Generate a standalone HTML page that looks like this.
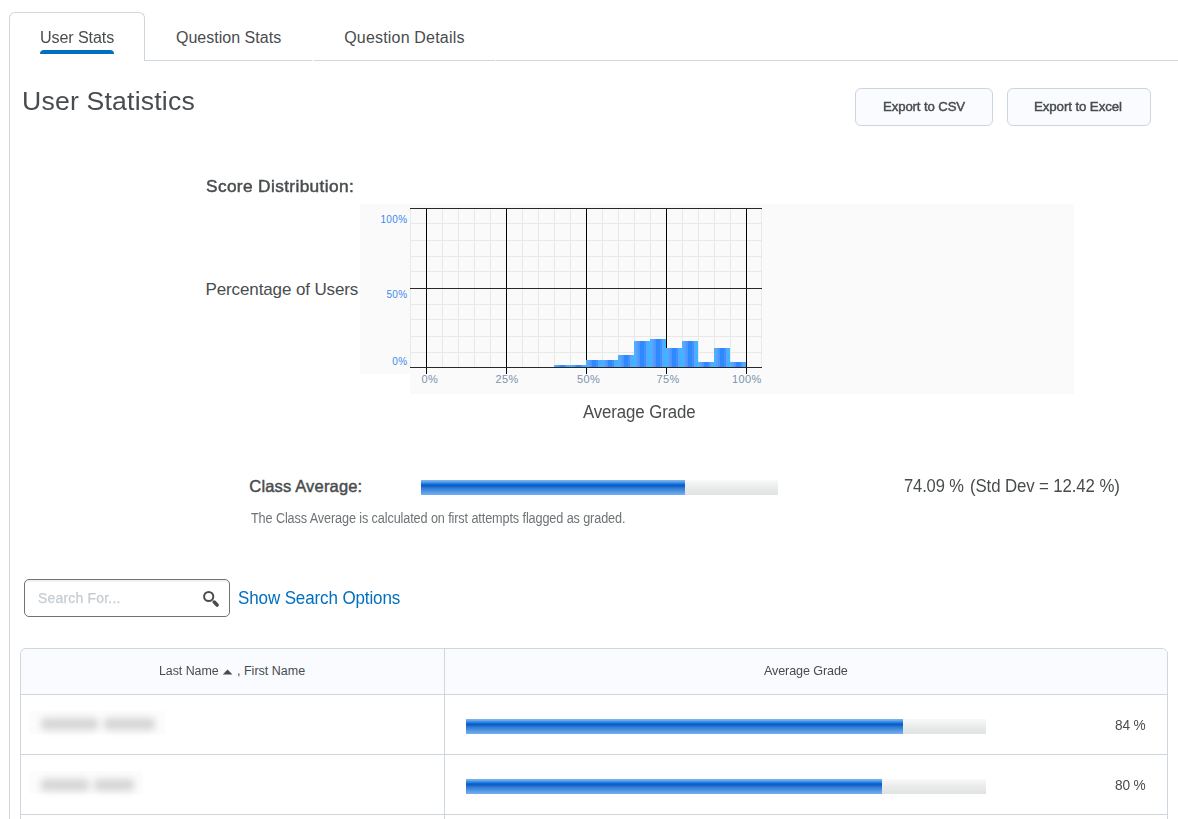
<!DOCTYPE html>
<html><head><meta charset="utf-8">
<style>
html,body{margin:0;padding:0;background:#fff;}
body{width:1178px;height:819px;overflow:hidden;position:relative;font-family:"Liberation Sans",sans-serif;color:#494c4e;}
.a{position:absolute;white-space:nowrap;}
.tx{position:absolute;white-space:nowrap;line-height:40px;transform-origin:0 0;color:#494c4e;}
/* tabs */
#vline{left:9px;top:60px;width:1px;height:759px;background:#cfd6de;}
#hline{left:144px;top:60px;width:1034px;height:1px;background:#cfd6de;}
#tab{left:9px;top:12px;width:134px;height:48px;border:1px solid #cfd6de;border-bottom:none;border-radius:6px 6px 0 0;background:#fff;}
#uline{left:40px;top:50px;width:74px;height:4px;background:#006fbf;border-radius:4px 4px 0 0;}
.btn{height:36px;border:1px solid #cdd5dd;border-radius:6px;background:#f9fbff;}
/* chart */
.bg{background:#fafafa;}
.yl{font-size:10px;color:#3f88ec;text-align:right;line-height:10px;letter-spacing:0.4px;}
.xl{font-size:11px;color:#7a93aa;line-height:11px;letter-spacing:0.4px;}
.pbar{height:15px;background:linear-gradient(#f8f8f8 0px,#f8f8f8 1px,#f6f6f6 1px,#f6f6f6 2px,#f4f4f4 2px,#f4f4f4 3px,#f2f3f3 3px,#f2f3f3 4px,#f0f1f1 4px,#f0f1f1 5px,#eeefef 5px,#eeefef 6px,#ececec 6px,#ececec 7px,#eaebeb 7px,#eaebeb 8px,#e9eaea 8px,#e9eaea 9px,#e7e8e8 9px,#e7e8e8 10px,#e6e7e7 10px,#e6e7e7 11px,#e5e6e6 11px,#e5e6e6 12px,#e4e5e5 12px,#e4e5e5 13px,#e3e4e4 13px,#e3e4e4 14px,#e2e3e3 14px,#e2e3e3 15px);}
.pfill{position:absolute;left:0;top:0;height:15px;background:linear-gradient(#7ab0e8 0px,#7ab0e8 1px,#68a6ea 1px,#68a6ea 2px,#4290e8 2px,#4290e8 3px,#2a80e2 3px,#2a80e2 4px,#0a68d8 4px,#0a68d8 5px,#0560d0 5px,#0560d0 6px,#2262b8 6px,#2262b8 7px,#2a72d0 7px,#2a72d0 8px,#2e80e0 8px,#2e80e0 9px,#3a86d8 9px,#3a86d8 10px,#4a8ed8 10px,#4a8ed8 11px,#5595e0 11px,#5595e0 12px,#5e9ee8 12px,#5e9ee8 13px,#68a6ec 13px,#68a6ec 14px,#70aaf0 14px,#70aaf0 15px);}
#table{left:20px;top:648px;width:1146px;height:200px;border:1px solid #cfd6de;border-radius:6px 6px 0 0;}
.blur{background:#d6d6d6;filter:blur(3.5px);height:12px;border-radius:4px;}
#note{color:#6e7376;}
#show{color:#006fbf;}
#search{color:#c5ccd3;-webkit-text-stroke:0.25px #c5ccd3;}
#tab1{left:39.59px;top:18px;font-size:16.0px;font-weight:normal;letter-spacing:-0.120px;transform:scaleX(1.0083);}
#tab2{left:176.00px;top:18px;font-size:16.0px;font-weight:normal;letter-spacing:0.015px;}
#tab3{left:344.20px;top:18px;font-size:16.0px;font-weight:normal;letter-spacing:0.187px;}
#title{left:22.29px;top:81px;font-size:26.5px;font-weight:normal;letter-spacing:0.193px;transform:scaleX(1.0041);}
#csv{left:882.52px;top:87px;font-size:13.5px;font-weight:normal;-webkit-text-stroke:0.45px currentColor;letter-spacing:-0.120px;transform:scaleX(0.9771);}
#excel{left:1033.91px;top:87px;font-size:13.5px;font-weight:normal;-webkit-text-stroke:0.45px currentColor;letter-spacing:-0.120px;transform:scaleX(0.9875);}
#score{left:206.20px;top:167px;font-size:16.0px;font-weight:normal;-webkit-text-stroke:0.45px currentColor;letter-spacing:0.350px;transform:scaleX(1.0779);}
#pct{left:205.50px;top:270px;font-size:17.0px;font-weight:normal;letter-spacing:-0.117px;}
#avg{left:583.30px;top:392px;font-size:17.5px;font-weight:normal;letter-spacing:-0.120px;transform:scaleX(0.9624);}
#classavg{left:249.30px;top:466px;font-size:16.5px;font-weight:normal;-webkit-text-stroke:0.45px currentColor;letter-spacing:0.169px;}
#note{left:250.50px;top:498px;font-size:14.0px;font-weight:normal;letter-spacing:-0.120px;transform:scaleX(0.9039);}
#std1{left:904.26px;top:466px;font-size:17.5px;font-weight:normal;letter-spacing:-0.120px;transform:scaleX(0.9435);}
#std2{left:970.04px;top:466px;font-size:17.5px;font-weight:normal;letter-spacing:-0.120px;transform:scaleX(0.9610);}
#show{left:238.36px;top:578px;font-size:18.0px;font-weight:normal;letter-spacing:-0.120px;transform:scaleX(0.9439);}
#search{left:37.50px;top:578px;font-size:14.0px;font-weight:normal;letter-spacing:0.217px;transform:scaleX(0.9951);}
#hn1{left:159.41px;top:651px;font-size:12.5px;font-weight:normal;letter-spacing:-0.050px;transform:scaleX(0.9932);}
#hn2{left:237.00px;top:651px;font-size:12.5px;font-weight:normal;letter-spacing:0.009px;}
#havg{left:764.00px;top:651px;font-size:13.5px;font-weight:normal;letter-spacing:-0.120px;transform:scaleX(0.9322);}
#p84{left:1114.80px;top:705px;font-size:14.0px;font-weight:normal;letter-spacing:-0.120px;transform:scaleX(0.9742);}
#p80{left:1114.80px;top:765px;font-size:14.0px;font-weight:normal;letter-spacing:-0.120px;transform:scaleX(0.9742);}
</style></head>
<body>
<div class="a" id="vline"></div>
<div class="a" id="hline"></div>
<div class="a" id="tab"></div>
<div class="a" id="uline"></div>
<div class="a" style="left:312px;top:60px;width:2px;height:1px;background:#f2f4f6;"></div>
<div class="a" style="left:495px;top:60px;width:1px;height:1px;background:#f2f4f6;"></div>
<div class="tx" id="tab1">User Stats</div>
<div class="tx" id="tab2">Question Stats</div>
<div class="tx" id="tab3">Question Details</div>

<div class="tx" id="title">User Statistics</div>
<div class="a btn" style="left:855px;top:88px;width:136px;"></div>
<div class="a btn" style="left:1007px;top:88px;width:142px;"></div>
<div class="tx" id="csv">Export to CSV</div>
<div class="tx" id="excel">Export to Excel</div>

<div class="tx" id="score">Score Distribution:</div>
<div class="tx" id="pct">Percentage of Users</div>

<div class="a bg" style="left:360px;top:204px;width:50px;height:170px;"></div>
<div class="a bg" style="left:410px;top:204px;width:664px;height:190px;"></div>
<svg class="a" style="left:0;top:0;" width="1178" height="819" viewBox="0 0 1178 819" shape-rendering="crispEdges">
<rect x="410" y="208" width="1" height="160" fill="#e8e8e8"/>
<rect x="426" y="208" width="1" height="160" fill="#e8e8e8"/>
<rect x="442" y="208" width="1" height="160" fill="#e8e8e8"/>
<rect x="458" y="208" width="1" height="160" fill="#e8e8e8"/>
<rect x="474" y="208" width="1" height="160" fill="#e8e8e8"/>
<rect x="490" y="208" width="1" height="160" fill="#e8e8e8"/>
<rect x="506" y="208" width="1" height="160" fill="#e8e8e8"/>
<rect x="522" y="208" width="1" height="160" fill="#e8e8e8"/>
<rect x="538" y="208" width="1" height="160" fill="#e8e8e8"/>
<rect x="554" y="208" width="1" height="160" fill="#e8e8e8"/>
<rect x="570" y="208" width="1" height="160" fill="#e8e8e8"/>
<rect x="586" y="208" width="1" height="160" fill="#e8e8e8"/>
<rect x="602" y="208" width="1" height="160" fill="#e8e8e8"/>
<rect x="618" y="208" width="1" height="160" fill="#e8e8e8"/>
<rect x="634" y="208" width="1" height="160" fill="#e8e8e8"/>
<rect x="650" y="208" width="1" height="160" fill="#e8e8e8"/>
<rect x="666" y="208" width="1" height="160" fill="#e8e8e8"/>
<rect x="682" y="208" width="1" height="160" fill="#e8e8e8"/>
<rect x="698" y="208" width="1" height="160" fill="#e8e8e8"/>
<rect x="714" y="208" width="1" height="160" fill="#e8e8e8"/>
<rect x="730" y="208" width="1" height="160" fill="#e8e8e8"/>
<rect x="746" y="208" width="1" height="160" fill="#e8e8e8"/>
<rect x="761" y="208" width="1" height="160" fill="#e8e8e8"/>
<rect x="410" y="223" width="352" height="1" fill="#e8e8e8"/>
<rect x="410" y="240" width="352" height="1" fill="#e8e8e8"/>
<rect x="410" y="256" width="352" height="1" fill="#e8e8e8"/>
<rect x="410" y="271" width="352" height="1" fill="#e8e8e8"/>
<rect x="410" y="304" width="352" height="1" fill="#e8e8e8"/>
<rect x="410" y="319" width="352" height="1" fill="#e8e8e8"/>
<rect x="410" y="336" width="352" height="1" fill="#e8e8e8"/>
<rect x="410" y="352" width="352" height="1" fill="#e8e8e8"/>
<rect x="426" y="208" width="1" height="166" fill="#000"/>
<rect x="506" y="208" width="1" height="166" fill="#000"/>
<rect x="586" y="208" width="1" height="166" fill="#000"/>
<rect x="666" y="208" width="1" height="166" fill="#000"/>
<rect x="746" y="208" width="1" height="166" fill="#000"/>
<rect x="410" y="208" width="352" height="1" fill="#282828"/>
<rect x="410" y="288" width="352" height="1" fill="#282828"/>
<rect x="410" y="367" width="352" height="1" fill="#282828"/>
<defs><pattern id="stripes" x="554" y="0" width="16" height="10" patternUnits="userSpaceOnUse"><rect x="0" y="0" width="1" height="10" fill="#40b8ff"/><rect x="1" y="0" width="1" height="10" fill="#5aa8ff"/><rect x="2" y="0" width="1" height="10" fill="#5aa0ff"/><rect x="3" y="0" width="1" height="10" fill="#5aa0ff"/><rect x="4" y="0" width="1" height="10" fill="#4a98ff"/><rect x="5" y="0" width="1" height="10" fill="#4a98ff"/><rect x="6" y="0" width="1" height="10" fill="#2e88ff"/><rect x="7" y="0" width="1" height="10" fill="#2e88ff"/><rect x="8" y="0" width="1" height="10" fill="#2e88ff"/><rect x="9" y="0" width="1" height="10" fill="#2e88ff"/><rect x="10" y="0" width="1" height="10" fill="#4090ff"/><rect x="11" y="0" width="1" height="10" fill="#4090ff"/><rect x="12" y="0" width="1" height="10" fill="#5aa5ff"/><rect x="13" y="0" width="1" height="10" fill="#5aa5ff"/><rect x="14" y="0" width="1" height="10" fill="#3ab8ff"/><rect x="15" y="0" width="1" height="10" fill="#3ab8ff"/></pattern></defs>
<rect x="554" y="365" width="32" height="2" fill="url(#stripes)"/>
<rect x="586" y="360" width="32" height="7" fill="url(#stripes)"/>
<rect x="618" y="355" width="16" height="12" fill="url(#stripes)"/>
<rect x="634" y="341" width="16" height="26" fill="url(#stripes)"/>
<rect x="650" y="339" width="16" height="28" fill="url(#stripes)"/>
<rect x="666" y="348" width="16" height="19" fill="url(#stripes)"/>
<rect x="682" y="341" width="16" height="26" fill="url(#stripes)"/>
<rect x="698" y="362" width="16" height="5" fill="url(#stripes)"/>
<rect x="714" y="348" width="16" height="19" fill="url(#stripes)"/>
<rect x="730" y="362" width="16" height="5" fill="url(#stripes)"/>
</svg>
<div class="a yl" style="left:370px;top:215px;width:37.6px;">100%</div>
<div class="a yl" style="left:370px;top:290px;width:37.6px;">50%</div>
<div class="a yl" style="left:370px;top:357px;width:37.6px;">0%</div>
<div class="a xl" style="left:421.5px;top:374px;">0%</div>
<div class="a xl" style="left:495.5px;top:374px;">25%</div>
<div class="a xl" style="left:577px;top:374px;">50%</div>
<div class="a xl" style="left:656.5px;top:374px;">75%</div>
<div class="a xl" style="left:732px;top:374px;">100%</div>
<div class="tx" id="avg">Average Grade</div>

<div class="tx" id="classavg">Class Average:</div>
<div class="a pbar" style="left:421px;top:480px;width:357px;"><div class="pfill" style="width:264px;"></div></div>
<div class="tx" id="std1">74.09 %</div>
<div class="tx" id="std2">(Std Dev = 12.42 %)</div>
<div class="tx" id="note">The Class Average is calculated on first attempts flagged as graded.</div>

<div class="a" style="left:24px;top:579px;width:204px;height:36px;border:1px solid #6e7376;border-radius:5px;background:#fff;box-shadow:inset 0 2px 0 #f1f2f4;"></div>
<div class="tx" id="search">Search For...</div>
<svg class="a" style="left:200px;top:588px;" width="20" height="20" viewBox="0 0 20 20">
  <circle cx="8.7" cy="8.5" r="4.6" fill="none" stroke="#494c4e" stroke-width="2"/>
  <line x1="14.2" y1="14.1" x2="17.1" y2="17.0" stroke="#494c4e" stroke-width="3.6" stroke-linecap="round"/>
</svg>
<div class="tx" id="show">Show Search Options</div>

<div class="a" id="table"></div>
<div class="a" style="left:21px;top:649px;width:1146px;height:45px;background:#f9fbff;border-radius:6px 6px 0 0;"></div>
<div class="a" style="left:20px;top:694px;width:1148px;height:1px;background:#cfd6de;"></div>
<div class="a" style="left:20px;top:754px;width:1148px;height:1px;background:#cfd6de;"></div>
<div class="a" style="left:20px;top:814px;width:1148px;height:1px;background:#cfd6de;"></div>
<div class="a" style="left:444px;top:649px;width:1px;height:170px;background:#cfd6de;"></div>
<div class="tx" id="hn1">Last Name</div>
<svg class="a" style="left:222px;top:669px;" width="12" height="6" viewBox="0 0 12 6"><path d="M0.8 5.5 L5.6 0.4 L10.4 5.5 Z" fill="#494c4e"/></svg>
<div class="tx" id="hn2">, First Name</div>
<div class="tx" id="havg">Average Grade</div>

<div class="a" style="left:29px;top:711px;width:136px;height:23px;background:#fcfcfc;"></div>
<div class="a" style="left:30px;top:771px;width:113px;height:23px;background:#fcfcfc;"></div>
<div class="a blur" style="left:41px;top:718px;width:57px;"></div>
<div class="a blur" style="left:104px;top:718px;width:51px;"></div>
<div class="a blur" style="left:41px;top:779px;width:48px;"></div>
<div class="a blur" style="left:94px;top:779px;width:40px;"></div>

<div class="a pbar" style="left:466px;top:719px;width:520px;"><div class="pfill" style="width:437px;"></div></div>
<div class="a pbar" style="left:466px;top:779px;width:520px;"><div class="pfill" style="width:416px;"></div></div>
<div class="tx" id="p84">84 %</div>
<div class="tx" id="p80">80 %</div>
</body></html>
